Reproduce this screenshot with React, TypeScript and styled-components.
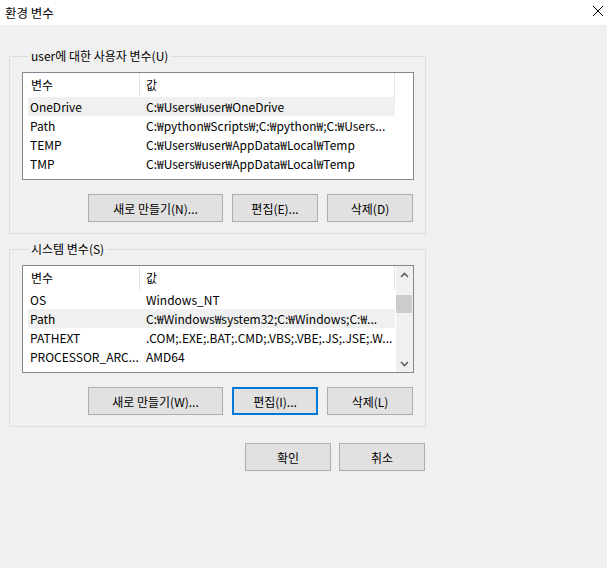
import React from 'react';
import styled, { createGlobalStyle } from 'styled-components';

const GlobalStyle = createGlobalStyle`
  html, body, #root {
    margin: 0;
    height: 100%;
  }
  body {
    background: #f0f0f0;
    font-family: "Noto Sans CJK KR", "Noto Sans", sans-serif;
    font-size: 12px;
    color: #000;
  }
`;

interface Row {
  name: string;
  value: string;
}

const userVars: Row[] = [
  { name: 'OneDrive', value: 'C:₩Users₩user₩OneDrive' },
  { name: 'Path', value: 'C:₩python₩Scripts₩;C:₩python₩;C:₩Users...' },
  { name: 'TEMP', value: 'C:₩Users₩user₩AppData₩Local₩Temp' },
  { name: 'TMP', value: 'C:₩Users₩user₩AppData₩Local₩Temp' },
];

const systemVars: Row[] = [
  { name: 'OS', value: 'Windows_NT' },
  { name: 'Path', value: 'C:₩Windows₩system32;C:₩Windows;C:₩...' },
  { name: 'PATHEXT', value: '.COM;.EXE;.BAT;.CMD;.VBS;.VBE;.JS;.JSE;.W...' },
  { name: 'PROCESSOR_ARC...', value: 'AMD64' },
  { name: '', value: '' },
];

const Chevron: React.FC<{ up?: boolean }> = ({ up }) => (
  <svg width="9" height="6" viewBox="0 0 9 6">
    <path
      d={up ? 'M1 5 L4.5 1.5 L8 5' : 'M1 1 L4.5 4.5 L8 1'}
      fill="none"
      stroke="#606060"
      strokeWidth="1.6"
    />
  </svg>
);

const VarList: React.FC<{ rows: Row[]; selected: number; scroll?: boolean }> = ({
  rows,
  selected,
  scroll,
}) => (
  <ListBox>
    <ListBody>
      <HeaderRow>
        <HeaderCell $width={117} $pad={8}>변수</HeaderCell>
        <HeaderCell $width={255} $pad={6}>값</HeaderCell>
      </HeaderRow>
      {rows.map((row, i) => (
        <ItemRow key={i} $selected={i === selected}>
          <NameCell>{row.name}</NameCell>
          <ValueCell>{row.value}</ValueCell>
        </ItemRow>
      ))}
    </ListBody>
    {scroll && (
      <ScrollBar>
        <ArrowButton>
          <Chevron up />
        </ArrowButton>
        <Track>
          <Thumb $offset={12} />
        </Track>
        <ArrowButton>
          <Chevron />
        </ArrowButton>
      </ScrollBar>
    )}
  </ListBox>
);

const App: React.FC = () => {
  return (
    <>
      <GlobalStyle />
      <TitleBar>
        <Title>환경 변수</Title>
        <CloseIcon width="12" height="12" viewBox="0 0 12 12">
          <path d="M1 1 L11 11 M11 1 L1 11" stroke="#000" strokeWidth="1" />
        </CloseIcon>
      </TitleBar>
      <Content>
        <Group>
          <Legend>user에 대한 사용자 변수(U)</Legend>
          <VarList rows={userVars} selected={0} />
          <ButtonRow>
            <Button $width={135}>새로 만들기(N)...</Button>
            <Button $width={86}>편집(E)...</Button>
            <Button $width={86}>삭제(D)</Button>
          </ButtonRow>
        </Group>
        <Group $spaced>
          <Legend>시스템 변수(S)</Legend>
          <VarList rows={systemVars} selected={1} scroll />
          <ButtonRow>
            <Button $width={135}>새로 만들기(W)...</Button>
            <Button $width={86} $focused>편집(I)...</Button>
            <Button $width={86}>삭제(L)</Button>
          </ButtonRow>
        </Group>
        <Footer>
          <Button $width={86}>확인</Button>
          <Button $width={86}>취소</Button>
        </Footer>
      </Content>
    </>
  );
};

const TitleBar = styled.div`
  height: 25px;
  background: #fff;
  display: flex;
  align-items: center;
  justify-content: space-between;
  padding: 0 3px 0 5px;
`;

const Title = styled.span`
  font-size: 12.5px;
  line-height: 16px;
`;

const CloseIcon = styled.svg`
  display: block;
  margin-top: -4px;
`;

const Content = styled.div`
  padding: 23px 0 0 9px;
  width: 417px;
`;

const Group = styled.fieldset<{ $spaced?: boolean }>`
  margin: ${({ $spaced }) => ($spaced ? '7px' : '0')} 0 0 0;
  padding: 8px 11px 11px 12px;
  border: 1px solid #dcdcdc;
  width: 417px;
  box-sizing: border-box;
  min-width: 0;
`;

const Legend = styled.legend`
  margin-left: 7px;
  padding: 0 2px;
  line-height: 16px;
  font-size: 12px;
`;

const ListBox = styled.div`
  display: flex;
  height: 108px;
  box-sizing: border-box;
  border: 1px solid #828790;
  background: #fff;
  overflow: hidden;
`;

const ListBody = styled.div`
  flex: 1;
  display: flex;
  flex-direction: column;
  min-width: 0;
`;

const HeaderRow = styled.div`
  display: flex;
  height: 24px;
  flex-shrink: 0;
`;

const HeaderCell = styled.div<{ $width: number; $pad: number }>`
  width: ${({ $width }) => $width}px;
  padding-left: ${({ $pad }) => $pad}px;
  box-sizing: border-box;
  border-right: 1px solid #e5e5e5;
  display: flex;
  align-items: center;
  line-height: 16px;
`;

const ItemRow = styled.div<{ $selected?: boolean }>`
  display: grid;
  grid-template-columns: 111px 256px;
  margin-left: 5px;
  width: 367px;
  height: 19px;
  flex-shrink: 0;
  align-items: center;
  background: ${({ $selected }) => ($selected ? '#f0f0f0' : 'transparent')};
  line-height: 16px;
`;

const NameCell = styled.div`
  padding-left: 2px;
  white-space: nowrap;
  overflow: hidden;
`;

const ValueCell = styled.div`
  padding-left: 7px;
  white-space: nowrap;
  overflow: hidden;
  text-overflow: ellipsis;
`;

const ScrollBar = styled.div`
  width: 17px;
  flex-shrink: 0;
  background: #f0f0f0;
  display: flex;
  flex-direction: column;
`;

const ArrowButton = styled.div`
  height: 17px;
  display: flex;
  align-items: center;
  justify-content: center;
`;

const Track = styled.div`
  flex: 1;
  padding: 0 1px 0 0;
`;

const Thumb = styled.div<{ $offset: number }>`
  margin-top: ${({ $offset }) => $offset}px;
  height: 18px;
  background: #cdcdcd;
`;

const ButtonRow = styled.div`
  display: flex;
  justify-content: flex-end;
  gap: 9px;
  margin-top: 14px;
  padding-right: 1px;
`;

const Footer = styled(ButtonRow)`
  margin-top: 16px;
  gap: 8px;
`;

const Button = styled.button<{ $width: number; $focused?: boolean }>`
  width: ${({ $width }) => $width}px;
  height: 28px;
  box-sizing: border-box;
  background: #e1e1e1;
  border: ${({ $focused }) => ($focused ? '2px solid #0078d7' : '1px solid #adadad')};
  border-radius: 0;
  padding: 0;
  font-family: inherit;
  font-size: 12px;
  color: #000;
`;

export default App;
